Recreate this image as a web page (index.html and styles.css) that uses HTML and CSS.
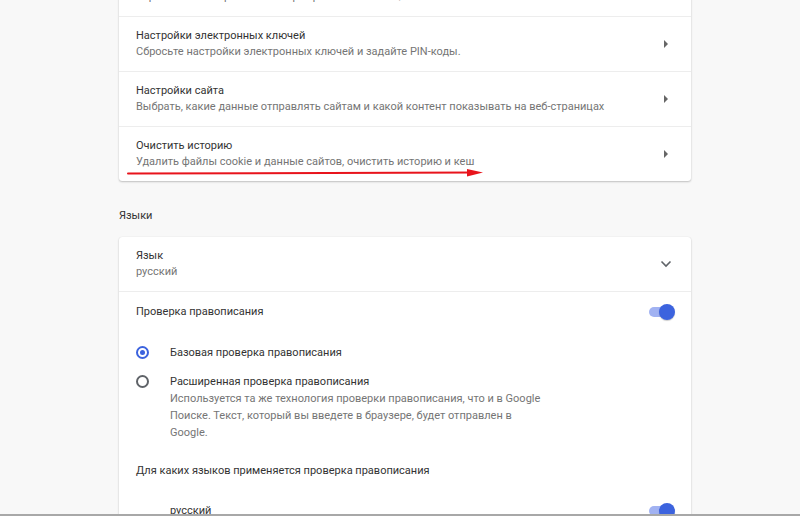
FILE: index.html
```html
<!DOCTYPE html>
<html lang="ru">
<head>
<meta charset="utf-8">
<link rel="stylesheet" href="styles.css">
</head>
<body>
<div class="page">
  <div class="card card-top">
    <div class="row">
      <div class="text">
        <div class="title">Управление настройками и сертификатами HTTPS/SSL</div>
        <div class="sub">Управление настройками и сертификатами HTTPS/SSL</div>
      </div>
    </div>
    <div class="row">
      <div class="text">
        <div class="title">Настройки электронных ключей</div>
        <div class="sub">Сбросьте настройки электронных ключей и задайте PIN-коды.</div>
      </div>
      <span class="arrow-r"></span>
    </div>
    <div class="row">
      <div class="text">
        <div class="title">Настройки сайта</div>
        <div class="sub">Выбрать, какие данные отправлять сайтам и какой контент показывать на веб-страницах</div>
      </div>
      <span class="arrow-r"></span>
    </div>
    <div class="row">
      <div class="text">
        <div class="title">Очистить историю</div>
        <div class="sub">Удалить файлы cookie и данные сайтов, очистить историю и кеш</div>
      </div>
      <span class="arrow-r"></span>
    </div>
    <svg class="annot" width="360" height="10" viewBox="0 0 360 10">
      <path d="M1 5.5 L348 4.5" stroke="#e8141c" stroke-width="2" fill="none" stroke-linecap="round"/>
      <path d="M340 1 L356 4.6 L340 8.5 Z" fill="#e8141c"/>
    </svg>
  </div>

  <h2 class="section">Языки</h2>

  <div class="card">
    <div class="row row-lang">
      <div class="text">
        <div class="title">Язык</div>
        <div class="sub">русский</div>
      </div>
      <svg class="chev" width="12" height="8" viewBox="0 0 12 8"><path d="M1.5 1.5 L6 6 L10.5 1.5" stroke="#5f6368" stroke-width="1.6" fill="none"/></svg>
    </div>
    <div class="row row-plain">
      <div class="text"><div class="title">Проверка правописания</div></div>
      <span class="toggle"><span class="knob"></span></span>
    </div>
    <div class="radios">
      <div class="radio-item">
        <span class="radio checked"></span>
        <div class="text"><div class="title">Базовая проверка правописания</div></div>
      </div>
      <div class="radio-item">
        <span class="radio"></span>
        <div class="text">
          <div class="title">Расширенная проверка правописания</div>
          <div class="sub desc">Используется та же технология проверки правописания, что и в Google Поиске. Текст, который вы введете в браузере, будет отправлен в Google.</div>
        </div>
      </div>
    </div>
    <div class="langs-head">Для каких языков применяется проверка правописания</div>
    <div class="lang-row">
      <span class="title">русский</span>
      <span class="toggle"><span class="knob"></span></span>
    </div>
  </div>
</div>
<div class="bottom-line"></div>
</body>
</html>
```

FILE: styles.css
```css
html, body {
  margin: 0;
  padding: 0;
  height: 516px;
  overflow: hidden;
}
body {
  background: #f8f8f8;
  font-family: Roboto, "Noto Sans", Arial, sans-serif;
  font-size: 11px;
  color: #333333;
  position: relative;
}
.page {
  width: 572px;
  margin: -39px 0 0 119px;
}
.card {
  background: #ffffff;
  border-radius: 3px;
  box-shadow: 0 1px 2px rgba(0,0,0,0.22), 0 0 1px rgba(0,0,0,0.12);
  position: relative;
}
.row {
  display: flex;
  align-items: center;
  height: 54px;
  padding: 0 17px;
  border-top: 1px solid #ededed;
}
.row:first-child { border-top: none; height: 55px; }
.row.row-lang { height: 54px; }
.row .text { flex: 1; }
.title {
  color: #333333;
  line-height: 16.5px;
}
.sub {
  color: #757575;
  line-height: 16.5px;
}
.arrow-r {
  width: 0;
  height: 0;
  border-top: 4px solid transparent;
  border-bottom: 4px solid transparent;
  border-left: 4px solid #666666;
  margin-right: 6px;
}
.annot {
  position: absolute;
  left: 8px;
  top: 207px;
}
.section {
  margin: 0;
  padding: 26px 0 13px 0;
  font-size: 11px;
  font-weight: 400;
  color: #333333;
  line-height: 17px;
}
.chev { margin-right: 2px; }
.row-plain { height: 40px; }
.toggle {
  position: relative;
  width: 22px;
  height: 10px;
  border-radius: 5px;
  background: #a1b2f2;
  margin-right: 3px;
}
.knob {
  position: absolute;
  right: -4px;
  top: -3px;
  width: 16px;
  height: 16px;
  border-radius: 50%;
  background: #3c63de;
  box-shadow: 0 1px 1px rgba(0,0,0,0.2);
}
.radios {
  padding: 13px 17px 0 17px;
}
.radio-item {
  display: flex;
  align-items: flex-start;
  margin-bottom: 12px;
}
.radio {
  width: 9px;
  height: 9px;
  border: 2px solid #5f6368;
  border-radius: 50%;
  margin: 1px 0 0 0;
  box-sizing: content-box;
  position: relative;
  flex: none;
}
.radio.checked {
  border-color: #3c63de;
}
.radio.checked::after {
  content: "";
  position: absolute;
  left: 2px;
  top: 2px;
  width: 5px;
  height: 5px;
  border-radius: 50%;
  background: #3c63de;
}
.radio-item .text { margin-left: 21px; }
.desc { width: 375px; line-height: 17px; }
.langs-head {
  padding: 9px 17px 0 17px;
  line-height: 17px;
}
.lang-row {
  display: flex;
  align-items: center;
  justify-content: space-between;
  padding: 24px 17px 20px 51px;
}
.bottom-line {
  position: absolute;
  left: 0;
  right: 0;
  top: 514px;
  height: 2px;
  background: #a8a8a8;
}
```
